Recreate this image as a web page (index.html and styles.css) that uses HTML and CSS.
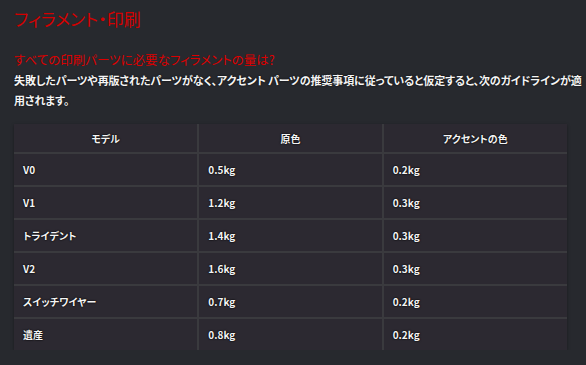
FILE: index.html
```html
<!DOCTYPE html>
<html lang="ja">
<head>
<meta charset="utf-8">
<link rel="stylesheet" href="styles.css">
</head>
<body>
<div class="page">
  <h1 class="title">フィラメント・印刷</h1>
  <h2 class="question">すべての印刷パーツに必要なフィラメントの量は?</h2>
  <p class="intro">失敗したパーツや再版されたパーツがなく、アクセント パーツの推奨事項に従っていると仮定すると、次のガイドラインが適<br>用されます。</p>
  <table class="grid">
    <thead>
      <tr><th>モデル</th><th>原色</th><th>アクセントの色</th></tr>
    </thead>
    <tbody>
      <tr><td>V0</td><td>0.5kg</td><td>0.2kg</td></tr>
      <tr><td>V1</td><td>1.2kg</td><td>0.3kg</td></tr>
      <tr><td>トライデント</td><td>1.4kg</td><td>0.3kg</td></tr>
      <tr><td>V2</td><td>1.6kg</td><td>0.3kg</td></tr>
      <tr><td>スイッチワイヤー</td><td>0.7kg</td><td>0.2kg</td></tr>
      <tr><td>遺産</td><td>0.8kg</td><td>0.2kg</td></tr>
    </tbody>
  </table>
</div>
</body>
</html>
```
FILE: styles.css
```css
html, body {
  margin: 0;
  padding: 0;
  background: #27292e;
}
body {
  font-family: "Noto Sans CJK JP", "Noto Sans", sans-serif;
  font-feature-settings: "palt";
  color: #f2f2f2;
}
.page {
  padding: 8px 19px 0 14px;
}
.title {
  margin: 0;
  font-size: 17px;
  font-weight: 400;
  line-height: 22px;
  color: #d40000;
}
.question {
  margin: 20px 0 0 0;
  font-size: 12.5px;
  font-weight: 400;
  line-height: 20px;
  color: #dc0000;
}
.intro {
  margin: 0;
  font-size: 11px;
  font-weight: 700;
  line-height: 20px;
  letter-spacing: -0.1px;
  color: #f4f4f4;
  text-shadow: 0 0 2px #000;
  white-space: nowrap;
}
.grid {
  margin-top: 14px;
  width: 553px;
  table-layout: fixed;
  border-collapse: collapse;
  background: #2c2931;
  box-shadow: 0 1px 3px rgba(0,0,0,0.35);
  font-size: 10px;
  font-weight: 700;
  color: #f4f4f4;
  text-shadow: 0 0 2px #000, 0 0 1px #000;
}
.grid th, .grid td {
  border: 2px solid #3a3a3e;
}
.grid tr:first-child th { border-top: none; }
.grid tr:last-child td { border-bottom: none; }
.grid th:first-child, .grid td:first-child { border-left: none; }
.grid th:last-child, .grid td:last-child { border-right: none; }
.grid th {
  height: 28px;
  padding: 0 10px;
  text-align: center;
}
.grid td {
  height: 31px;
  padding: 0 9px;
  text-align: left;
}
```
